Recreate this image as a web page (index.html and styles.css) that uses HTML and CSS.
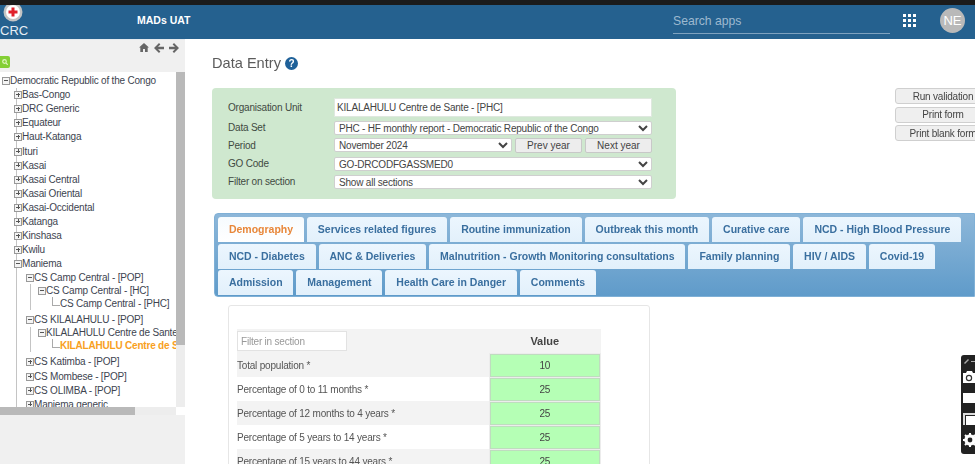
FILE: index.html
```html
<!DOCTYPE html>
<html lang="en">
<head>
    <meta charset="UTF-8">
    <meta name="viewport" content="width=device-width, initial-scale=1.0">
    <title>Data Entry</title>
    <link rel="stylesheet" href="styles.css">
</head>
<body>
    <header class="topbar">
        <div class="logo">
            <svg class="logo-mark" width="20" height="20" viewBox="0 0 20 20">
                <circle cx="10" cy="10" r="9.5" fill="#c4c4c4"/>
                <circle cx="10" cy="10" r="7" fill="#fff"/>
                <path d="M8.5 5.5h3v3h3v3h-3v3h-3v-3h-3v-3h3z" fill="#e0202a"/>
            </svg>
            <span class="logo-text">CRC</span>
        </div>
        <div class="app-title">MADs UAT</div>
        <div class="search-apps">Search apps</div>
        <svg class="apps-icon" width="13" height="13" viewBox="0 0 13 13" fill="#fff">
            <rect x="0" y="0" width="3" height="3"/><rect x="5" y="0" width="3" height="3"/><rect x="10" y="0" width="3" height="3"/>
            <rect x="0" y="5" width="3" height="3"/><rect x="5" y="5" width="3" height="3"/><rect x="10" y="5" width="3" height="3"/>
            <rect x="0" y="10" width="3" height="3"/><rect x="5" y="10" width="3" height="3"/><rect x="10" y="10" width="3" height="3"/>
        </svg>
        <div class="avatar">NE</div>
    </header>

    <div class="layout">
        <aside class="sidebar">
            <div class="side-tools">
                <svg width="10" height="9" viewBox="0 0 11 10" fill="#666"><path d="M5.5 0 11 5 9.6 5 9.6 10 6.6 10 6.6 6.6 4.4 6.6 4.4 10 1.4 10 1.4 5 0 5z"/></svg>
                <svg width="10" height="10" viewBox="0 0 10 10" fill="#666"><path d="M5 0 6.4 1.4 4 3.8H10V6.2H4L6.4 8.6 5 10 0 5z"/></svg>
                <svg width="10" height="10" viewBox="0 0 10 10" fill="#666"><path d="M5 0 3.6 1.4 6 3.8H0V6.2H6L3.6 8.6 5 10 10 5z"/></svg>
            </div>
            <div class="search-btn">
                <svg width="6" height="6" viewBox="0 0 6 6" fill="none" stroke="#dff5c0" stroke-width="1.2"><circle cx="2.5" cy="2.5" r="1.8"/><path d="M4 4 5.8 5.8"/></svg>
            </div>
            <div class="tree-box">
                <div class="tree">
                    <ul>
                        <li><div class="node"><span class="tog minus"></span>Democratic Republic of the Congo</div>
                            <ul class="level1">
                                <li><div class="node"><span class="tog"></span>Bas-Congo</div></li>
                                <li><div class="node"><span class="tog"></span>DRC Generic</div></li>
                                <li><div class="node"><span class="tog"></span>Equateur</div></li>
                                <li><div class="node"><span class="tog"></span>Haut-Katanga</div></li>
                                <li><div class="node"><span class="tog"></span>Ituri</div></li>
                                <li><div class="node"><span class="tog"></span>Kasai</div></li>
                                <li><div class="node"><span class="tog"></span>Kasai Central</div></li>
                                <li><div class="node"><span class="tog"></span>Kasai Oriental</div></li>
                                <li><div class="node"><span class="tog"></span>Kasai-Occidental</div></li>
                                <li><div class="node"><span class="tog"></span>Katanga</div></li>
                                <li><div class="node"><span class="tog"></span>Kinshasa</div></li>
                                <li><div class="node"><span class="tog"></span>Kwilu</div></li>
                                <li><div class="node"><span class="tog minus"></span>Maniema</div>
                                    <ul>
                                        <li class="tight"><div class="node"><span class="tog minus"></span>CS Camp Central - [POP]</div>
                                            <ul class="lined">
                                                <li><div class="node"><span class="tog minus"></span>CS Camp Central - [HC]</div>
                                                    <ul>
                                                        <li><div class="node leaf"><span class="elbow"></span>CS Camp Central - [PHC]</div></li>
                                                    </ul>
                                                </li>
                                            </ul>
                                        </li>
                                        <li class="gap-top"><div class="node"><span class="tog minus"></span>CS KILALAHULU - [POP]</div>
                                            <ul class="lined">
                                                <li><div class="node"><span class="tog minus"></span>KILALAHULU Centre de Sante - [PHC]</div>
                                                    <ul>
                                                        <li><div class="node leaf selected"><span class="elbow"></span>KILALAHULU Centre de Sante - [PHC]</div></li>
                                                    </ul>
                                                </li>
                                            </ul>
                                        </li>
                                        <li class="gap-top"><div class="node"><span class="tog"></span>CS Katimba - [POP]</div></li>
                                        <li><div class="node"><span class="tog"></span>CS Mombese - [POP]</div></li>
                                        <li><div class="node"><span class="tog"></span>CS OLIMBA - [POP]</div></li>
                                        <li><div class="node"><span class="tog"></span>Maniema generic</div></li>
                                    </ul>
                                </li>
                            </ul>
                        </li>
                    </ul>
                </div>
                <div class="scroll-v"><div class="thumb-v"></div></div>
                <div class="scroll-h"><div class="thumb-h"></div></div>
                <div class="scroll-corner"></div>
            </div>
        </aside>

        <main class="content">
            <h2 class="page-title">Data Entry
                <svg width="13" height="13" viewBox="0 0 13 13"><circle cx="6.5" cy="6.5" r="6.5" fill="#1f6199"/><text x="6.5" y="10" text-anchor="middle" font-family="Liberation Sans" font-weight="700" font-size="10" fill="#fff">?</text></svg>
            </h2>

            <div class="form-row">
                <form class="entry-form">
                    <label>Organisation Unit</label>
                    <input class="org-input" type="text" value="KILALAHULU Centre de Sante - [PHC]">
                    <label>Data Set</label>
                    <select><option>PHC - HF monthly report - Democratic Republic of the Congo</option></select>
                    <label>Period</label>
                    <div class="period">
                        <select><option>November 2024</option></select>
                        <button type="button">Prev year</button>
                        <button type="button">Next year</button>
                    </div>
                    <label>GO Code</label>
                    <select><option>GO-DRCODFGASSMED0</option></select>
                    <label>Filter on section</label>
                    <select><option>Show all sections</option></select>
                </form>
                <div class="actions">
                    <button type="button">Run validation</button>
                    <button type="button">Print form</button>
                    <button type="button">Print blank form</button>
                </div>
            </div>

            <div class="tabs">
                <a class="tab active">Demography</a>
                <a class="tab">Services related figures</a>
                <a class="tab">Routine immunization</a>
                <a class="tab">Outbreak this month</a>
                <a class="tab">Curative care</a>
                <a class="tab">NCD - High Blood Pressure</a>
                <a class="tab">NCD - Diabetes</a>
                <a class="tab">ANC &amp; Deliveries</a>
                <a class="tab">Malnutrition - Growth Monitoring consultations</a>
                <a class="tab">Family planning</a>
                <a class="tab">HIV / AIDS</a>
                <a class="tab">Covid-19</a>
                <a class="tab">Admission</a>
                <a class="tab">Management</a>
                <a class="tab">Health Care in Danger</a>
                <a class="tab">Comments</a>
            </div>

            <div class="section-card">
                <table class="values">
                    <thead>
                        <tr>
                            <th class="filter-cell"><input type="text" placeholder="Filter in section"></th>
                            <th class="value-head">Value</th>
                        </tr>
                    </thead>
                    <tbody>
                        <tr><td>Total population *</td><td class="val">10</td></tr>
                        <tr><td>Percentage of 0 to 11 months *</td><td class="val">25</td></tr>
                        <tr><td>Percentage of 12 months to 4 years *</td><td class="val">25</td></tr>
                        <tr><td>Percentage of 5 years to 14 years *</td><td class="val">25</td></tr>
                        <tr><td>Percentage of 15 years to 44 years *</td><td class="val">25</td></tr>
                    </tbody>
                </table>
            </div>
        </main>
    </div>

    <div class="float-tools">
        <svg width="14" height="99" viewBox="0 0 14 99">
            <path d="M3 8 7 4 8 5 4 9z" fill="#aaa"/><rect x="10" y="6" width="4" height="1" fill="#aaa"/>
            <path d="M2 18h3l1-2h5l1 2h2v10H2z" fill="#fff"/><circle cx="8" cy="23" r="2.6" fill="none" stroke="#333" stroke-width="1.2"/>
            <rect x="2" y="38" width="12" height="10" fill="#fff"/>
            <path d="M2 70V58h12v2H4v10z" fill="#ddd"/><rect x="5" y="61" width="9" height="9" fill="#fff"/>
            <circle cx="9" cy="85" r="4.2" fill="none" stroke="#fff" stroke-width="3"/>
            <path d="M9 78v14M2 85h14M4 80l10 10M14 80 4 90" stroke="#fff" stroke-width="2"/>
            <circle cx="9" cy="85" r="2.4" fill="#222"/>
        </svg>
    </div>
</body>
</html>
```

FILE: styles.css
```css
* {
    box-sizing: border-box;
}
html, body {
    height: 100%;
}
body {
    margin: 0;
    overflow: hidden;
    font-family: "Liberation Sans", Arial, sans-serif;
    font-size: 10px;
    letter-spacing: -0.2px;
    color: #444;
    background-color: #fff;
    border-top: 5px solid #1b1b1b;
    display: flex;
    flex-direction: column;
    filter: blur(0.4px);
}

/* top bar */
.topbar {
    flex: none;
    height: 34px;
    background-color: #25618f;
    color: white;
    display: flex;
    align-items: center;
    overflow: hidden;
    letter-spacing: normal;
}
.logo {
    width: 137px;
    align-self: stretch;
    overflow: hidden;
}
.logo-mark {
    display: block;
    margin: -3px 0 0 3px;
}
.logo-text {
    display: block;
    font-size: 13px;
    line-height: 16px;
    margin-top: 1px;
    color: #e6eef5;
}
.app-title {
    width: 536px;
    font-size: 10.5px;
    font-weight: bold;
    margin-top: -4px;
}
.search-apps {
    width: 217px;
    height: 23px;
    margin-top: 0;
    font-size: 12.2px;
    line-height: 21px;
    color: #9db9cf;
    border-bottom: 1px solid #7ea2bf;
}
.apps-icon {
    margin-left: 13px;
    margin-top: -3px;
}
.avatar {
    width: 25px;
    height: 25px;
    margin-left: 24px;
    margin-top: -3px;
    border-radius: 50%;
    background-color: #b9b9b9;
    color: #fff;
    font-size: 13px;
    text-align: center;
    line-height: 25px;
}

.layout {
    flex: 1;
    min-height: 0;
    display: flex;
}

/* left tree */
.sidebar {
    flex: none;
    width: 185px;
    background-color: #f0f0f0;
    border-top: 1px solid #e4e9ee;
}
.side-tools {
    height: 16px;
    padding: 3px 6px 0 0;
    display: flex;
    justify-content: flex-end;
    gap: 5px;
}
.search-btn {
    width: 10px;
    height: 12px;
    margin-bottom: 4px;
    background-color: #84cf35;
    border-radius: 0 2px 2px 0;
    display: flex;
    align-items: center;
    justify-content: center;
}
.tree-box {
    display: grid;
    grid-template-columns: 176px 9px;
    grid-template-rows: 335px 8px;
}
.tree {
    background-color: white;
    overflow: hidden;
    padding: 2px 0 0 2px;
    white-space: nowrap;
}
.tree ul {
    list-style: none;
    margin: 0;
    padding: 0 0 0 12px;
}
.tree > ul {
    padding-left: 0;
}
.tree .level1 {
    background: linear-gradient(#c4c4c4, #c4c4c4) 14px 0 / 1px 100% no-repeat;
}
.tree ul.lined {
    background: linear-gradient(#c4c4c4, #c4c4c4) 4px 0 / 1px 100% no-repeat;
}
.node {
    height: 14.1px;
    line-height: 14px;
    display: flex;
    align-items: center;
    color: #3d4450;
}
.tight > .node,
.lined .node {
    height: 13px;
}
.lined .leaf {
    height: 12.5px;
}
.gap-top {
    margin-top: 3px;
}
.selected {
    color: #f8a01e;
    font-weight: bold;
}
.tog {
    position: relative;
    flex: none;
    width: 8px;
    height: 8px;
    border: 1px solid #999;
    background-color: #f4f4f4;
}
.tog::before,
.tog::after {
    content: "";
    position: absolute;
    background-color: #555;
}
.tog::before {
    left: 1px;
    top: 2px;
    width: 4px;
    height: 1px;
}
.tog::after {
    left: 2.5px;
    top: 0.5px;
    width: 1px;
    height: 4px;
}
.tog.minus::after {
    display: none;
}
.elbow {
    flex: none;
    width: 8px;
    height: 9px;
    margin: -5px 0 0 2px;
    border-left: 1px solid #aaa;
    border-bottom: 1px solid #aaa;
}
.scroll-v {
    background-color: #ededed;
}
.thumb-v {
    height: 273px;
    background-color: #b9b9b9;
}
.scroll-h {
    background-color: #ededed;
}
.thumb-h {
    width: 135px;
    height: 8px;
    background-color: #b9b9b9;
}
.scroll-corner {
    background-color: white;
}

/* main area */
.content {
    flex: 1;
    min-width: 0;
    padding: 0 0 0 27px;
    overflow: hidden;
}
.page-title {
    margin: 16px 0 16px;
    height: 17px;
    font-size: 14.6px;
    line-height: 17px;
    font-weight: normal;
    letter-spacing: normal;
    color: #5b5b5b;
    display: flex;
    align-items: center;
    gap: 4px;
}
.form-row {
    display: flex;
    width: 790px;
}
.entry-form {
    flex: none;
    width: 464px;
    height: 111px;
    padding: 10px 24px 0 16px;
    background-color: #cfe8cf;
    border-radius: 4px;
    display: grid;
    grid-template-columns: 106px 318px;
    grid-template-rows: 18.5px 14px 14px 14px 14px;
    row-gap: 4px;
    align-items: center;
}
.entry-form label {
    color: #3f4a42;
}
.entry-form input,
.entry-form select,
.entry-form button,
.actions button {
    font-family: "Liberation Sans", Arial, sans-serif;
    font-size: 10px;
    letter-spacing: -0.2px;
    color: #444;
}
.org-input {
    width: 318px;
    height: 19px;
    border: 1px solid #dfe8df;
    padding: 0 2px;
    background-color: white;
}
.entry-form select {
    width: 100%;
    height: 14px;
    padding: 0;
    border: 1px solid #cfcfcf;
    border-radius: 2px;
    background-color: white;
}
.period {
    display: flex;
    gap: 3px;
}
.period select {
    flex: none;
    width: 178px;
}
.period button {
    flex: 1;
    height: 15px;
    padding: 0;
    letter-spacing: normal;
    background-color: #ededed;
    border: 1px solid #c8c8c8;
    border-radius: 2px;
}
.actions {
    flex: none;
    width: 96px;
    margin-left: 219px;
    display: flex;
    flex-direction: column;
    gap: 2.5px;
}
.actions button {
    height: 16px;
    padding: 0;
    white-space: nowrap;
    background-color: #efefef;
    border: 1px solid #cfcfcf;
    border-radius: 3px;
}

/* tabs */
.tabs {
    width: 761px;
    height: 84px;
    margin: 14px 0 0 2px;
    padding: 3px 0 0 3px;
    display: flex;
    flex-wrap: wrap;
    align-content: flex-start;
    column-gap: 3px;
    row-gap: 1.5px;
    background: linear-gradient(#8db7d9, #5f9bca);
    border: 1px solid #7fb0d6;
    border-radius: 4px 0 0 4px;
}
.tab {
    height: 25px;
    padding: 0 10.9px;
    line-height: 25px;
    font-size: 10.5px;
    font-weight: bold;
    letter-spacing: normal;
    white-space: nowrap;
    color: #3a6f9f;
    background: linear-gradient(#ecf6fe, #e2f0fb);
    border-radius: 3px 3px 0 0;
}
.tab.active {
    color: #e8873a;
    background: linear-gradient(#f6fbfe, #ffffff);
}

/* data table */
.section-card {
    width: 422px;
    height: 200px;
    margin: 8px 0 0 16px;
    padding: 23px 0 0 8px;
    border: 1px solid #e6e6e6;
    border-radius: 3px;
}
.values {
    width: 364px;
    border-collapse: collapse;
    table-layout: fixed;
}
.values th {
    height: 24px;
    padding: 0;
    background-color: #f3f3f3;
}
.filter-cell {
    width: 252px;
    text-align: left;
}
.filter-cell input {
    display: block;
    width: 110px;
    height: 20px;
    padding: 0 3px;
    font-family: "Liberation Sans", Arial, sans-serif;
    font-size: 10px;
    letter-spacing: -0.2px;
    border: 1px solid #e2e2e2;
    background-color: white;
}
.filter-cell input::placeholder {
    color: #999;
}
.value-head {
    font-size: 11px;
    letter-spacing: normal;
    color: #444;
}
.values td {
    height: 24px;
    padding: 0;
    color: #555;
}
.values tbody tr:nth-child(odd) td {
    background-color: #f3f3f3;
}
.values td.val,
.values tbody tr:nth-child(odd) td.val {
    text-align: center;
    background-color: #b5ffb5;
    border: 1px solid #ececec;
    box-shadow: inset 0 0 0 1px #bfdcbf;
    color: #444;
}

/* page capture widget lying over the page */
.float-tools {
    position: absolute;
    left: 961px;
    top: 350px;
    width: 14px;
    height: 99px;
    background-color: #222;
    border-radius: 3px 0 0 3px;
    overflow: hidden;
}
.float-tools svg {
    display: block;
}
```
